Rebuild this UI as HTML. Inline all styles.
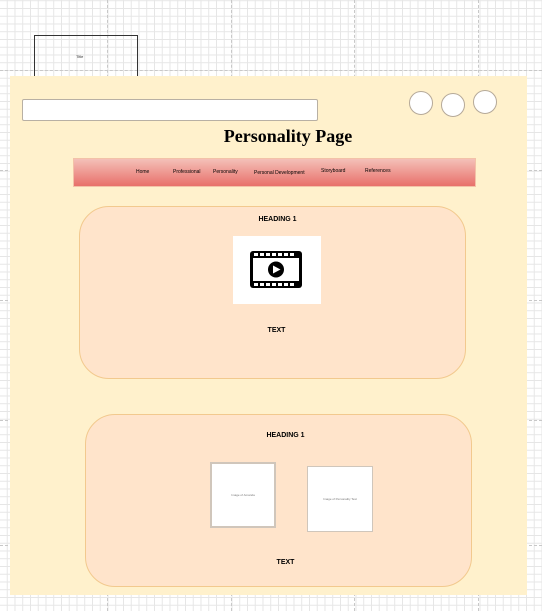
<!DOCTYPE html>
<html><head><style>
*{margin:0;padding:0;box-sizing:border-box}
body{width:542px;height:611px;position:relative;overflow:hidden;font-family:"Liberation Sans",sans-serif;
background-color:#fff;
background-image:linear-gradient(#e6e6e6 1px,transparent 1px),linear-gradient(90deg,#e6e6e6 1px,transparent 1px);
background-size:7.75px 7.75px;background-position:-1px 8px;}
.a{position:absolute}
.dv{position:absolute;top:0;bottom:0;width:0;border-left:1px dashed #c8c8c8}
.dh{position:absolute;left:0;right:0;height:0;border-top:1px dashed #c8c8c8}
.circ{position:absolute;width:24px;height:24px;border-radius:50%;background:#fff;border:1px solid #b5a999}
.nav span{position:absolute;font-size:5px;color:#000}
.card{position:absolute;background:#ffe4cb;border:1px solid #f2c98e;border-radius:30px}
.h{position:absolute;font-size:7px;font-weight:bold;width:100%;text-align:center}
.img{position:absolute;background:#fff;border:1px solid #d0c6bb;font-size:3px;color:#777;display:flex;align-items:center;justify-content:center}
</style></head><body>
<div class="dv" style="left:107px"></div><div class="dv" style="left:231px"></div><div class="dv" style="left:354px"></div><div class="dv" style="left:478px"></div>
<div class="dh" style="top:70px"></div><div class="dh" style="top:170px"></div><div class="dh" style="top:300px"></div><div class="dh" style="top:420px"></div><div class="dh" style="top:545px"></div>
<div class="a" style="left:34px;top:35px;width:104px;height:45px;border:1px solid #333;border-bottom:none"></div>
<div class="a" style="left:76px;top:54px;font-size:4px;color:#333">Title</div>
<div class="a" style="left:10px;top:76px;width:517px;height:519px;background:#fff1cc"></div>
<div class="a" style="left:22px;top:99px;width:296px;height:22px;background:#fff;border:1px solid #b8b0a4;border-radius:2px"></div>
<div class="circ" style="left:409px;top:91px"></div>
<div class="circ" style="left:441px;top:93px"></div>
<div class="circ" style="left:473px;top:90px"></div>
<div class="a" style="left:150px;top:126px;width:276px;text-align:center;font-family:'Liberation Serif',serif;font-weight:bold;font-size:18px">Personality Page</div>
<div class="a nav" style="left:73px;top:158px;width:403px;height:29px;background:linear-gradient(#f4c0b8,#e8706a);border:1px solid #f3c2a8">
<span style="left:62px;top:10px">Home</span><span style="left:99px;top:10px">Professional</span><span style="left:139px;top:10px">Personality</span><span style="left:180px;top:11px">Personal Development</span><span style="left:247px;top:9px">Storyboard</span><span style="left:291px;top:9px">References</span></div>
<div class="card" style="left:79px;top:206px;width:387px;height:173px">
<div class="h" style="top:9px;left:5px">HEADING 1</div>
<div class="h" style="top:120px;left:4px">TEXT</div></div>
<div class="a" style="left:233px;top:236px;width:88px;height:68px;background:#fff">
<svg width="88" height="68" viewBox="0 0 88 68"><rect x="17" y="15" width="52" height="37" rx="3" fill="#000"/>
<rect x="20" y="22" width="46" height="23" fill="#fff"/>
<g fill="#fff"><rect x="21" y="17" width="4" height="3"/><rect x="27" y="17" width="4" height="3"/><rect x="33" y="17" width="4" height="3"/><rect x="39" y="17" width="4" height="3"/><rect x="45" y="17" width="4" height="3"/><rect x="51" y="17" width="4" height="3"/><rect x="57" y="17" width="4" height="3"/>
<rect x="21" y="47" width="4" height="3"/><rect x="27" y="47" width="4" height="3"/><rect x="33" y="47" width="4" height="3"/><rect x="39" y="47" width="4" height="3"/><rect x="45" y="47" width="4" height="3"/><rect x="51" y="47" width="4" height="3"/><rect x="57" y="47" width="4" height="3"/></g>
<circle cx="43" cy="33.5" r="8" fill="#000"/><path d="M40 29.5L47.5 33.5L40 37.5Z" fill="#fff"/></svg></div>
<div class="card" style="left:85px;top:414px;width:387px;height:173px">
<div class="h" style="top:17px;left:7px">HEADING 1</div>
<div class="h" style="top:144px;left:7px">TEXT</div></div>
<div class="img" style="left:210px;top:462px;width:66px;height:66px;border-width:2px">Image of Amanda</div>
<div class="img" style="left:307px;top:466px;width:66px;height:66px">Image of Personality Test</div>
</body></html>
